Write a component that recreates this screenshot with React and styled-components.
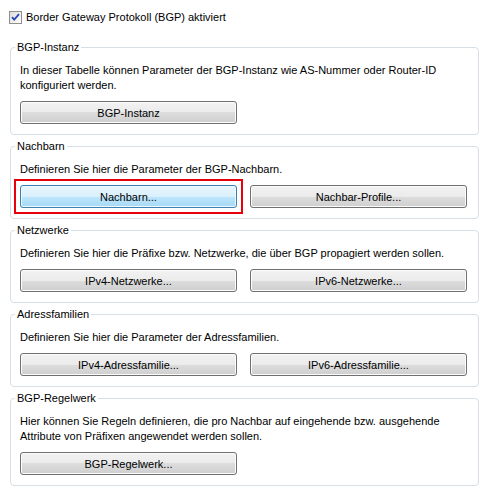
import React from 'react';
import styled, { createGlobalStyle } from 'styled-components';

const GlobalStyle = createGlobalStyle`
	body {
		margin: 0;
		background: #ffffff;
		font-family: "Liberation Sans", Arial, sans-serif;
		font-size: 11px;
		color: #000000;
	}
`;

const Page = styled.div`
	width: 486px;
	padding: 10px 0 0 10px;
	box-sizing: border-box;
`;

const CheckRow = styled.label`
	display: flex;
	align-items: center;
	gap: 4px;
	height: 14px;
	margin-left: -1px;
	margin-bottom: 16px;
`;

const Group = styled.fieldset`
	width: 469px;
	box-sizing: border-box;
	margin: 0 0 4px 0;
	padding: 9px 10px 10px 9px;
	border: 1px solid #d5dfe5;
	border-radius: 4px;
	min-width: 0;
`;

const Title = styled.legend`
	margin-left: -5px;
	padding: 0 2px;
	line-height: 14px;
`;

const Text = styled.p`
	margin: 0 0 8px 0;
	line-height: 15px;
`;

const Buttons = styled.div`
	display: grid;
	grid-template-columns: 217px 217px;
	gap: 13px;
`;

const Marker = styled.div`
	margin: -6px;
	padding: 4px;
	border: 2px solid #e8000b;
	display: flex;
`;

const Button = styled.button`
	width: 100%;
	height: 23px;
	padding: 0;
	font-family: inherit;
	font-size: 11px;
	color: #000000;
	border: 1px solid ${p => (p.$active ? '#3c7fb1' : '#707070')};
	border-radius: 3px;
	box-shadow: inset 0 0 0 1px ${p => (p.$active ? '#f0f9fe' : '#fcfcfc')};
	background: ${p => p.$active
		? 'linear-gradient(#eaf6fd 0%, #d9f0fc 50%, #bee6fd 50%, #a7d9f5 100%)'
		: 'linear-gradient(#f2f2f2 0%, #ebebeb 50%, #dddddd 50%, #cfcfcf 100%)'};
`;

const CheckBox = () => (
	<svg width="13" height="13" viewBox="0 0 13 13">
		<defs>
			<linearGradient id="cb" x1="0" y1="0" x2="1" y2="1">
				<stop offset="0" stopColor="#dcdcd7" />
				<stop offset="1" stopColor="#ffffff" />
			</linearGradient>
		</defs>
		<rect x="0.5" y="0.5" width="12" height="12" fill="url(#cb)" stroke="#8f8f8f" />
		<path d="M3 6.2 L5.2 8.6 L10 3.2" fill="none" stroke="#2a46b8" strokeWidth="1.8" />
	</svg>
);

const sections = [
	{
		title: 'BGP-Instanz',
		text: ['In dieser Tabelle können Parameter der BGP-Instanz wie AS-Nummer oder Router-ID', 'konfiguriert werden.'],
		buttons: ['BGP-Instanz'],
	},
	{
		title: 'Nachbarn',
		text: ['Definieren Sie hier die Parameter der BGP-Nachbarn.'],
		buttons: ['Nachbarn...', 'Nachbar-Profile...'],
		active: 0,
	},
	{
		title: 'Netzwerke',
		text: ['Definieren Sie hier die Präfixe bzw. Netzwerke, die über BGP propagiert werden sollen.'],
		buttons: ['IPv4-Netzwerke...', 'IPv6-Netzwerke...'],
	},
	{
		title: 'Adressfamilien',
		text: ['Definieren Sie hier die Parameter der Adressfamilien.'],
		buttons: ['IPv4-Adressfamilie...', 'IPv6-Adressfamilie...'],
	},
	{
		title: 'BGP-Regelwerk',
		text: ['Hier können Sie Regeln definieren, die pro Nachbar auf eingehende bzw. ausgehende', 'Attribute von Präfixen angewendet werden sollen.'],
		buttons: ['BGP-Regelwerk...'],
	},
];

const App = () => (
	<Page>
		<GlobalStyle />
		<CheckRow>
			<CheckBox />
			<span>Border Gateway Protokoll (BGP) aktiviert</span>
		</CheckRow>
		{sections.map(s => (
			<Group key={s.title}>
				<Title>{s.title}</Title>
				<Text>
					{s.text.map((line, i) => (
						<React.Fragment key={i}>
							{i > 0 && <br />}
							{line}
						</React.Fragment>
					))}
				</Text>
				<Buttons>
					{s.buttons.map((b, i) => {
						const button = <Button $active={s.active === i}>{b}</Button>;
						return s.active === i
							? <Marker key={b}>{button}</Marker>
							: <React.Fragment key={b}>{button}</React.Fragment>;
					})}
				</Buttons>
			</Group>
		))}
	</Page>
);

export default App;
